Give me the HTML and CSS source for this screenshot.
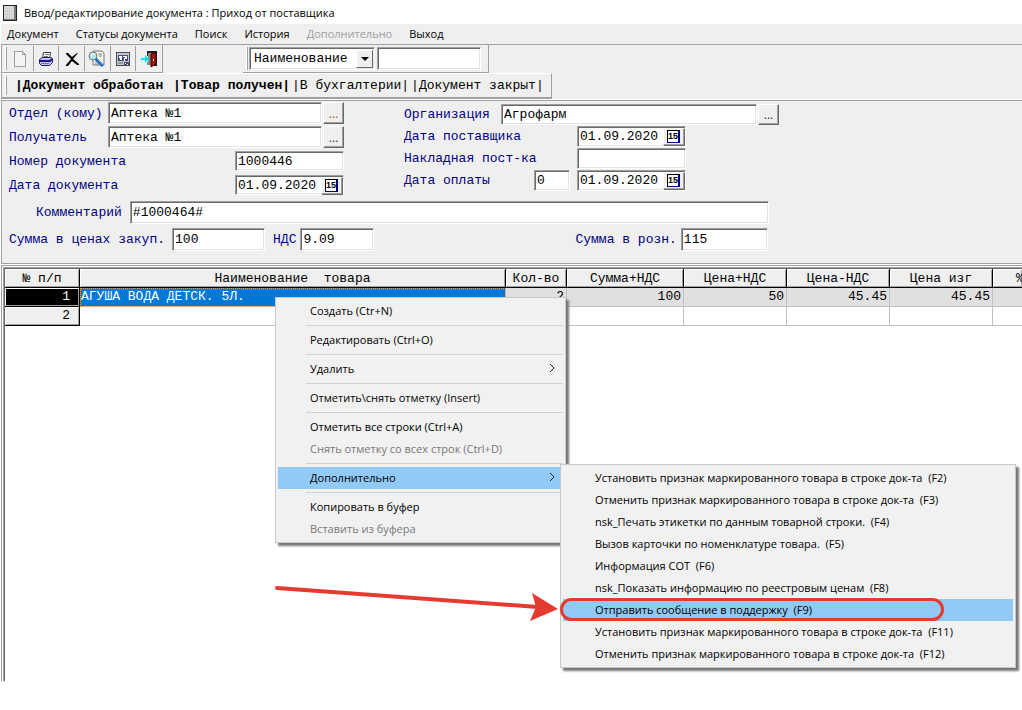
FILE: index.html
```html
<!DOCTYPE html>
<html lang="ru">
<head>
<meta charset="utf-8">
<title>Приход от поставщика</title>
<link rel="stylesheet" href="styles.css">
</head>
<body>
<header class="titlebar">
  <svg class="title-icon" width="14" height="16" viewBox="0 0 14 16" shape-rendering="crispEdges"><rect width="14" height="16" fill="#222"/><rect x="1" y="1" width="10" height="13" fill="#d8d8d8"/><rect x="11" y="1" width="2" height="14" fill="#777"/><rect x="1" y="14" width="12" height="1" fill="#777"/><path d="M2 3h8M2 6h8M2 9h8M2 12h8" stroke="#c0c0c0" stroke-dasharray="1 1"/></svg>
  <span>Ввод/редактирование документа : Приход от поставщика</span>
</header>
<nav class="menubar">
  <button>Документ</button><button>Статусы документа</button><button>Поиск</button><button>История</button><button disabled>Дополнительно</button><button>Выход</button>
</nav>
<div class="toolbar">
  <div class="band icons">
    <i class="grip"></i>
    <button class="tool" aria-label="Новый"><svg width="16" height="18" viewBox="0 0 16 18" shape-rendering="crispEdges"><path d="M2.5 1.5h8l3 3v12h-11zM10.500 1.500v3h3" fill="#f4f4f4" stroke="#a0a0a0"/></svg></button>
    <button class="tool" aria-label="Печать"><svg width="16" height="18" viewBox="0 0 16 18"><path d="M5.500 2.500h7l-1 6h-7z" fill="#fff" stroke="#333"/><path d="M7 4.500h4M6 6.500h4" stroke="#777"/><path d="M1.500 9.500l3-2h8l2 1v4l-3 3h-8l-2-2z" fill="#c4c4f0" stroke="#181870"/><path d="M2 11h10l2-2" stroke="#181880" stroke-width="2" fill="none"/><path d="M3 13.500h8" stroke="#6868c8"/></svg></button>
    <button class="tool" aria-label="Удалить"><svg width="16" height="18" viewBox="0 0 16 18"><path d="M2 3h2l4 4 5-4h1L9 9l6 5v1h-2l-5-4-4 5H2v-1l5-6-5-5z" fill="#000"/></svg></button>
    <button class="tool" aria-label="Просмотр"><svg width="18" height="18" viewBox="0 0 18 18"><path d="M5 1h9l2 2v12H5z" fill="#f4f4e8" stroke="#777"/><path d="M10 4h4M11 6h3M7 12h4M7 14h4" stroke="#888"/><circle cx="5" cy="6" r="4" fill="#b9e8ea" stroke="#667b80"/><path d="M3 5q2-3 4 0" stroke="#fff" fill="none"/><path d="M8 9l7 7" stroke="#1262c0" stroke-width="3"/><path d="M9 9l7 7" stroke="#70b8ff"/></svg></button>
    <button class="tool" aria-label="Справка"><svg width="16" height="18" viewBox="0 0 16 18" shape-rendering="crispEdges"><rect x="1" y="2" width="14" height="14" fill="#444c58"/><rect x="2" y="3" width="12" height="12" fill="#c4c8ce"/><rect x="3" y="5" width="10" height="6" fill="#46507a"/><path d="M4 6h3v4H5V8H4zM8 6h4v3h-2v2H9V8h1V7H8z" fill="#fff"/><path d="M3 12h5v2H3z" fill="#999"/><path d="M9 12h5v3h-5z" fill="#4a4a80"/><path d="M10 13h1v1h-1zM12 14h1v1h-1z" fill="#fff"/></svg></button>
    <button class="tool" aria-label="Выход"><svg width="18" height="18" viewBox="0 0 18 18"><path d="M7 1h10v15h-4V3H8v3H7z" fill="#222"/><path d="M8 3h4v12H7v-3h1z" fill="#888"/><path d="M11 4l5-2v12l-5 3z" fill="#a11212" stroke="#3e0000"/><path d="M13 9h1v2h-1z" fill="#ff6"/><path d="M1 8h4V5l4 4-4 4v-3H1z" fill="#00e5ee"/></svg></button>
  </div>
  <div class="band search">
    <i class="grip"></i>
    <div class="combo"><select aria-label="Поле поиска"><option>Наименование</option></select><span class="combo-arrow"></span></div>
    <input class="sunken query" aria-label="Поиск">
  </div>
</div>
<div class="statusbar">
  <div class="status-band">
    <i class="grip"></i>
    <button class="on">|Документ обработан&nbsp;</button><button class="on">|Товар получен|</button><button>|В бухгалтерии|</button><button>|Документ закрыт|</button>
  </div>
</div>
<main>
<form class="panel">
  <div class="columns">
    <div class="left">
      <div class="row"><label for="dep">Отдел (кому)</label><input id="dep" class="sunken w-party" value="Аптека №1"><button type="button" class="dots gold">...</button></div>
      <div class="row"><label for="rec">Получатель</label><input id="rec" class="sunken w-party" value="Аптека №1"><button type="button" class="dots">...</button></div>
      <div class="row"><label for="num">Номер документа</label><input id="num" class="sunken w-date" value="1000446"></div>
      <div class="row"><label for="dat">Дата документа</label><div class="sunken date w-date"><input id="dat" value="01.09.2020"><button type="button" aria-label="Календарь"><span>15</span></button></div></div>
    </div>
    <div class="right">
      <div class="row"><label for="org">Организация</label><input id="org" class="sunken w-org" value="Агрофарм"><button type="button" class="dots">...</button></div>
      <div class="row"><label for="sup">Дата поставщика</label><div class="sunken date w-date"><input id="sup" value="01.09.2020"><button type="button" aria-label="Календарь"><span>15</span></button></div></div>
      <div class="row"><label for="inv">Накладная пост-ка</label><input id="inv" class="sunken w-date"></div>
      <div class="row"><label for="pay">Дата оплаты</label><input class="sunken w-days" value="0" aria-label="Дней до оплаты"><div class="sunken date w-date"><input id="pay" value="01.09.2020"><button type="button" aria-label="Календарь"><span>15</span></button></div></div>
    </div>
  </div>
  <div class="comment"><label for="com">Комментарий</label><input id="com" class="sunken tall" value="#1000464#"></div>
  <div class="sums">
    <label for="s1">Сумма в ценах закуп.</label><input id="s1" class="sunken tall w-sum" value="100">
    <label for="s2" class="vat">НДС</label><input id="s2" class="sunken tall w-vat" value="9.09">
    <label for="s3" class="retail">Сумма в розн.</label><input id="s3" class="sunken tall w-retail" value="115">
  </div>
</form>
<section class="sheet">
  <table>
    <colgroup><col class="c-num"><col class="c-name"><col class="c-qty"><col class="c-sum"><col class="c-price"><col class="c-price"><col class="c-price"><col></colgroup>
    <thead><tr><th>№ п/п</th><th>Наименование&nbsp; товара</th><th>Кол-во</th><th>Сумма+НДС</th><th>Цена+НДС</th><th>Цена-НДС</th><th>Цена изг</th><th>%</th></tr></thead>
    <tbody>
      <tr class="current"><th>1</th><td class="name">АГУША ВОДА ДЕТСК. 5Л.</td><td>2</td><td>100</td><td>50</td><td>45.45</td><td>45.45</td><td></td></tr>
      <tr><th>2</th><td></td><td></td><td></td><td></td><td></td><td></td><td></td></tr>
    </tbody>
  </table>
</section>
</main>
<div class="menu context">
  <button>Создать (Ctr+N)</button><hr>
  <button>Редактировать (Ctrl+O)</button><hr>
  <button>Удалить<svg width="6" height="10" viewBox="0 0 6 10"><path d="M1 1l4 4-4 4" fill="none" stroke="#222"/></svg></button><hr>
  <button>Отметить\снять отметку (Insert)</button><hr>
  <button>Отметить все строки (Ctrl+A)</button>
  <button disabled>Снять отметку со всех строк (Ctrl+D)</button><hr>
  <button class="hot">Дополнительно<svg width="6" height="10" viewBox="0 0 6 10"><path d="M1 1l4 4-4 4" fill="none" stroke="#222"/></svg></button><hr>
  <button>Копировать в буфер</button>
  <button disabled>Вставить из буфера</button>
</div>
<div class="menu submenu">
  <button>Установить признак маркированного товара в строке док-та&nbsp; (F2)</button>
  <button>Отменить признак маркированного товара в строке док-та&nbsp; (F3)</button>
  <button>nsk_Печать этикетки по данным товарной строки.&nbsp; (F4)</button>
  <button>Вызов карточки по номенклатуре товара.&nbsp; (F5)</button>
  <button>Информация СОТ&nbsp; (F6)</button>
  <button>nsk_Показать информацию по реестровым ценам&nbsp; (F8)</button>
  <button class="hot">Отправить сообщение в поддержку&nbsp; (F9)</button>
  <button>Установить признак маркированного товара в строке док-та&nbsp; (F11)</button>
  <button>Отменить признак маркированного товара в строке док-та&nbsp; (F12)</button>
</div>
<div class="mark"></div>
<svg class="arrow" width="290" height="40" viewBox="0 0 290 40"><path d="M3 8L264 27" stroke="#e53a2f" stroke-width="4" stroke-linecap="round"/><path d="M258 13l26 16-28 12 6-14z" fill="#e53a2f"/></svg>
</body>
</html>
```
FILE: styles.css
```css
* { box-sizing: border-box; }
body { margin: 0; min-height: 100vh; background: #fff; color: #000; font: 11px "Open Sans", "Noto Sans", sans-serif; overflow: hidden; display: flex; flex-direction: column; }
button, input, select { margin: 0; padding: 0; border: 0; border-radius: 0; background: none; color: inherit; font: inherit; outline: 0; white-space: pre; }
.titlebar { display: flex; align-items: center; gap: 7px; height: 24px; padding: 1px 3px 0; }
.menubar { display: flex; gap: 17px; height: 20px; margin-left: 1px; padding: 0 0 2px 6px; background: #efefef; }
.menubar button:disabled { color: #a0a0a0; }
.toolbar, .statusbar, main { font: 13px "Liberation Mono", monospace; }
.toolbar { display: flex; gap: 80px; height: 29px; margin-left: 1px; background: #efefef; border-top: 1px solid #a0a0a0; border-left: 1px solid #a0a0a0; }
.band { display: flex; align-items: center; border-right: 1px solid #a0a0a0; border-bottom: 1px solid #a0a0a0; }
.grip { width: 2px; margin: 2px 1px 2px 3px; align-self: stretch; border-left: 1px solid #fff; border-right: 1px solid #a0a0a0; }
.tool { display: flex; align-items: center; justify-content: center; width: 26px; height: 25px; border-right: 1px solid #a0a0a0; }
.tool:last-child { border: 0; }
.icons { width: 161px; }
.search { width: 246px; }
.sunken, .combo { height: 20px; padding: 0 2px; background: #fff; border: 1px solid; border-color: #a0a0a0 #fff #fff #a0a0a0; box-shadow: inset 1px 1px #696969, inset -1px -1px #e3e3e3; }
.combo { display: flex; align-items: center; width: 126px; height: 23px; padding: 2px 1px 2px 4px; }
.combo select { flex: 1; min-width: 0; appearance: none; }
.combo-arrow { display: flex; align-items: center; justify-content: center; width: 17px; height: 18px; background: #efefef; border: 1px solid; border-color: #fff #696969 #696969 #fff; }
.combo-arrow::before { content: ""; border: 4px solid transparent; border-top-color: #000; border-bottom: 0; }
.query { width: 104px; height: 23px; margin-left: 2px; }
.statusbar { display: flex; height: 26px; margin-left: 1px; background: #efefef; }
.status-band { display: flex; align-items: center; width: 551px; border: 1px solid #a0a0a0; border-top-color: #fff; border-bottom-width: 2px; }
.statusbar .grip { margin-right: 8px; }
.statusbar button { margin-right: 2px; }
.statusbar .on { font-weight: bold; }
main { display: flex; flex-direction: column; flex: 1; margin-bottom: 29px; }
.panel { margin: 1px 0 0 1px; padding-bottom: 12px; background: #efefef; border: 1px solid #a0a0a0; border-right: 0; color: #000080; }
.panel input, .date { color: #000; }
.columns { display: flex; gap: 60px; padding-left: 7px; }
.row { display: flex; align-items: center; }
.row label { flex: 1; }
.left { width: 335px; }
.left .row { height: 24px; }
.left .w-party, .left .dots { height: 22px; }
.right { width: 375px; padding-top: 2px; }
.right .row { height: 22px; }
.right .row:nth-child(n+2) { padding-right: 93px; }
.right .sunken, .right .dots { height: 21px; }
.w-party { width: 214px; }
.w-date { width: 109px; }
.w-org { width: 256px; }
.w-days { width: 36px; margin-right: 7px; }
.dots { width: 21px; margin-left: 1px; background: #efefef; border: 1px solid; border-color: #fff #696969 #696969 #fff; box-shadow: inset -1px -1px #a0a0a0; color: #333; font: 12px "Open Sans", sans-serif; }
.panel .gold { color: #a05a00; }
.date { display: flex; align-items: center; padding: 1px; }
.date input { flex: 1; min-width: 0; padding-left: 1px; }
.date button { display: flex; align-items: center; justify-content: center; width: 21px; height: 17px; background: #efefef; border: 1px solid; border-color: #fff #a0a0a0 #a0a0a0 #fff; box-shadow: 1px 1px #696969; }
.date span { padding: 1px 0; background: #fff; border: 1px solid #000; border-right: 2px solid #000080; border-bottom-color: #000080; font: bold 9px/9px "Liberation Sans", sans-serif; }
.tall { height: 23px; }
.comment { display: flex; align-items: center; gap: 8px; padding: 4px 0 0 34px; }
.comment input { width: 639px; }
.sums { display: flex; align-items: center; padding: 4px 0 0 7px; }
.w-sum { width: 93px; margin-left: 7px; }
.vat { margin-left: 8px; }
.w-vat { width: 74px; margin-left: 4px; }
.retail { margin-left: 201px; }
.w-retail { width: 87px; margin-left: 4px; }
.sheet { flex: 1; overflow: hidden; margin: 1px 0 0 1px; border: 1px solid #a0a0a0; border-right: 0; border-bottom: 0; box-shadow: inset 1px 1px #fff, inset 2px 2px #a0a0a0, inset 3px 3px #696969; padding: 3px 0 0 3px; }
table { width: 100%; table-layout: fixed; border-collapse: separate; border-spacing: 0; }
.c-num { width: 75px; } .c-name { width: 426px; } .c-qty { width: 61px; } .c-sum { width: 117px; } .c-price { width: 103px; }
th, td { height: 19px; padding: 0 2px; line-height: 18px; font-weight: normal; text-align: right; white-space: pre; border-right: 1px solid #c0c0c0; border-bottom: 1px solid #c0c0c0; }
th { background: #efefef; border-color: #000; box-shadow: inset 1px 1px #fff, inset -1px -1px #a0a0a0; }
thead th { padding-top: 1px; line-height: 17px; text-align: center; }
thead th:last-child { padding: 1px 0 0 23px; text-align: left; border-right: 0; }
td:last-child { border-right: 0; }
tbody th { padding-right: 9px; }
.current th { background: #000; color: #fff; }
.current td { background: #e0e0e0; }
.current .name { padding-left: 1px; background: #0078d7; color: #fff; text-align: left; outline: 1px dotted #ff9a3c; outline-offset: -1px; }
.menu { position: absolute; z-index: 1; padding: 2px; background: #f1f1f1; border: 1px solid #c8c8c8; box-shadow: 3px 3px 2px #777; }
.menu button { display: flex; align-items: center; justify-content: space-between; width: 100%; height: 22px; padding: 0 8px 2px 32px; }
.menu button:disabled { color: #777; }
.menu .hot { background: #91c9f7; }
.menu hr { height: 1px; margin: 3px 0 3px 28px; border: 0; background: #d2d2d2; }
.context { left: 275px; top: 297px; width: 291px; }
.submenu { left: 560px; top: 464px; width: 456px; }
.mark { position: absolute; z-index: 2; left: 560px; top: 598px; width: 384px; height: 23px; border: 3px solid #e53a2f; border-radius: 12px; }
.arrow { position: absolute; z-index: 2; left: 274px; top: 580px; overflow: visible; }
```
